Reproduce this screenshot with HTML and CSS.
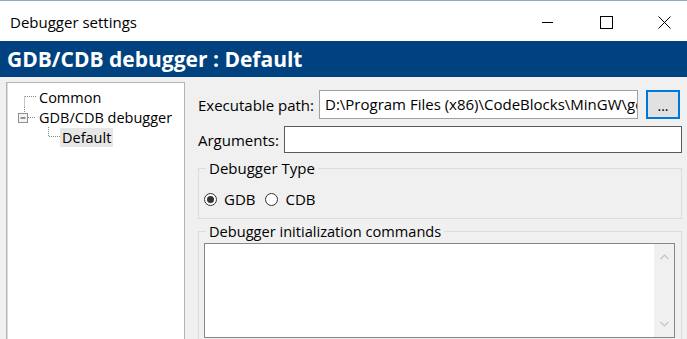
FILE: index.html
```html
<!DOCTYPE html>
<html>
<head>
<meta charset="utf-8">
<title>Debugger settings</title>
<link rel="stylesheet" href="styles.css">
</head>
<body>
<div class="window">
  <div class="titlebar">
    <span class="title">Debugger settings</span>
    <div class="controls">
      <span class="ctl"><svg width="12" height="12" viewBox="0 0 12 12"><path d="M0 6.5H11" stroke="#000" stroke-width="1"/></svg></span>
      <span class="ctl"><svg width="13" height="13" viewBox="0 0 13 13"><rect x="0.5" y="0.5" width="12" height="12" fill="none" stroke="#000" stroke-width="1"/></svg></span>
      <span class="ctl"><svg width="13" height="13" viewBox="0 0 13 13"><path d="M0.5 0.5L12.5 12.5M12.5 0.5L0.5 12.5" stroke="#000" stroke-width="1"/></svg></span>
    </div>
  </div>
  <div class="header">GDB/CDB debugger : Default</div>
  <div class="main">
    <div class="tree">
      <div class="node">
        <svg class="conn" width="32" height="20" viewBox="0 0 32 20"><path d="M17.5 9.5V20M18 9.5H29" stroke="#8a8a8a" stroke-width="1" stroke-dasharray="1 1" fill="none"/></svg>
        <span class="label">Common</span>
      </div>
      <div class="node">
        <svg class="conn" width="32" height="20" viewBox="0 0 32 20"><path d="M17.5 0V6M21 10.5H29" stroke="#8a8a8a" stroke-width="1" stroke-dasharray="1 1" fill="none"/><rect x="11.5" y="6.5" width="9" height="9" fill="#f4f4f4" stroke="#8f8f8f"/><path d="M13.5 11H18.5" stroke="#333" stroke-width="1"/></svg>
        <span class="label">GDB/CDB debugger</span>
      </div>
      <div class="node">
        <svg class="conn" width="53" height="20" viewBox="0 0 53 20"><path d="M41.5 0V9.5M42 9.5H53" stroke="#8a8a8a" stroke-width="1" stroke-dasharray="1 1" fill="none"/></svg>
        <span class="label selected">Default</span>
      </div>
    </div>
    <div class="pane">
      <div class="row exec">
        <span class="lbl">Executable path:</span>
        <div class="input path">D:\Program Files (x86)\CodeBlocks\MinGW\gdb</div>
        <div class="browse">...</div>
      </div>
      <div class="row args">
        <span class="lbl arglbl">Arguments:</span>
        <div class="input argsin"></div>
      </div>
      <fieldset class="group typegroup">
        <legend>Debugger Type</legend>
        <div class="radios">
          <span class="radio checked"></span><span class="rtext">GDB</span>
          <span class="radio"></span><span class="rtext">CDB</span>
        </div>
      </fieldset>
      <fieldset class="group initgroup">
        <legend>Debugger initialization commands</legend>
        <div class="textarea">
          <div class="ta-body"></div>
          <div class="vscroll">
            <div class="arrow"><svg width="9" height="6" viewBox="0 0 9 6"><path d="M0.5 5L4.5 1L8.5 5" stroke="#c4c4c4" stroke-width="1.2" fill="none"/></svg></div>
            <div class="arrow"><svg width="9" height="6" viewBox="0 0 9 6"><path d="M0.5 1L4.5 5L8.5 1" stroke="#c4c4c4" stroke-width="1.2" fill="none"/></svg></div>
          </div>
        </div>
      </fieldset>
    </div>
  </div>
</div>
</body>
</html>
```
FILE: styles.css
```css
html, body {
  margin: 0;
  padding: 0;
  overflow: hidden;
  background: #f0f0f0;
}
body {
  font-family: "Open Sans", "Noto Sans", sans-serif;
  font-size: 15px;
  color: #000;
  width: 687px;
  height: 339px;
}
.window {
  display: flex;
  flex-direction: column;
  height: 339px;
  overflow: hidden;
}
.titlebar {
  flex: none;
  height: 40px;
  border-top: 1px solid #8ea9c9;
  background: #fff;
  display: flex;
  align-items: center;
  overflow: hidden;
}
.title {
  padding-left: 10px;
  font-size: 15px;
  flex: 1;
  margin-top: 1px;
}
.controls {
  display: flex;
  margin-right: -6px;
  margin-top: 2px;
}
.ctl {
  width: 58px;
  height: 30px;
  display: flex;
  align-items: center;
  justify-content: center;
}
.header {
  flex: none;
  height: 36px;
  background: #00427f;
  color: #fff;
  font-weight: 700;
  font-size: 21px;
  line-height: 36px;
  padding-left: 7px;
  white-space: nowrap;
}
.main {
  flex: 1;
  min-height: 0;
  display: flex;
  align-items: flex-start;
  background: #f0f0f0;
  overflow: hidden;
}
.tree {
  flex: none;
  margin-left: 6px;
  margin-top: 5px;
  width: 177px;
  height: 300px;
  background: #fff;
  border: 1px solid #b4b4bc;
  box-shadow: inset 1px 0 #dcdce0;
  padding-top: 4px;
}
.node {
  display: flex;
  align-items: center;
  height: 20px;
}
.conn {
  flex: none;
  display: block;
}
.label {
  font-size: 14.5px;
  line-height: 19px;
  white-space: nowrap;
}
.label.selected {
  padding: 0 2px;
  background: #e6e6e6;
}
.pane {
  flex: none;
  margin-left: 13px;
  width: 484px;
  display: flex;
  flex-direction: column;
}
.row {
  display: flex;
  align-items: center;
}
.exec {
  margin-top: 13px;
  height: 29px;
}
.lbl {
  flex: 1;
  white-space: nowrap;
}
.input {
  background: #fff;
  box-sizing: border-box;
  white-space: nowrap;
  overflow: hidden;
}
.path {
  flex: none;
  width: 319px;
  height: 29px;
  border: 1px solid #a0a0a0;
  padding-left: 5px;
  line-height: 27px;
}
.browse {
  flex: none;
  margin-left: 8px;
  margin-right: 2px;
  width: 34px;
  height: 29px;
  box-sizing: border-box;
  border: 2px solid #0078d7;
  background: #e1e1e1;
  display: flex;
  align-items: center;
  justify-content: center;
  font-size: 14px;
  line-height: 14px;
  padding-top: 2px;
}
.args {
  margin-top: 7px;
  height: 27px;
}
.arglbl {
  flex: none;
  width: 86px;
}
.argsin {
  flex: 1;
  height: 27px;
  border: 1px solid #5a5a5a;
}
.group {
  margin: 0;
  padding: 0 6px 0 5px;
  border: 1px solid #dcdcdc;
  min-width: 0;
}
.group legend {
  padding: 0 3px;
  margin-left: 2px;
  line-height: 20px;
  font-size: 15px;
}
.initgroup legend {
  font-size: 14.6px;
}
.typegroup {
  margin-top: 5px;
  padding-bottom: 9px;
}
.radios {
  margin-top: 11px;
  height: 20px;
  display: flex;
  align-items: center;
}
.radio {
  flex: none;
  width: 13px;
  height: 13px;
  box-sizing: border-box;
  border: 1px solid #333;
  border-radius: 50%;
  background: #fff;
  display: flex;
  align-items: center;
  justify-content: center;
}
.radio.checked::after {
  content: "";
  width: 7px;
  height: 7px;
  border-radius: 50%;
  background: #333;
}
.rtext {
  margin-left: 7px;
  margin-right: 10px;
}
.initgroup {
  margin-top: 2px;
  padding-bottom: 6px;
}
.textarea {
  margin-top: 2px;
  height: 95px;
  box-sizing: border-box;
  border: 1px solid #868686;
  background: #fff;
  display: flex;
}
.ta-body {
  flex: 1;
}
.vscroll {
  width: 20px;
  background: #f0f0f0;
  display: flex;
  flex-direction: column;
  justify-content: space-between;
}
.arrow {
  height: 26px;
  display: flex;
  align-items: center;
  justify-content: center;
}
```
